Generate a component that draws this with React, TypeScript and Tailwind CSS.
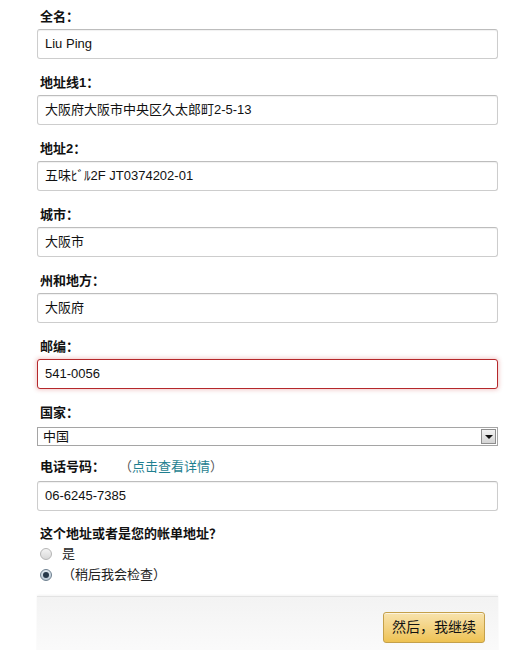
import React from "react";

const font = { fontFamily: '"Liberation Sans", "Noto Sans CJK SC", Arial, sans-serif' };

type FieldProps = { label: string; value: string; error?: boolean };

const Field = ({ label, value, error }: FieldProps) => (
  <div className="mb-[15px]">
    <div className="h-[18px] leading-[18px] text-[13px] font-bold text-[#111] pl-[3px]">{label}</div>
    <div
      className={
        "mt-[3px] h-[30px] rounded-[3px] border bg-white flex items-center px-[7px] text-[13px] text-[#111] " +
        (error
          ? "border-[#b5282b] shadow-[0_0_4px_1px_rgba(200,40,40,0.25)]"
          : "border-[#cdcdcd] border-t-[#bdbdbd] shadow-[inset_0_1px_1px_rgba(0,0,0,0.06)]")
      }
    >
      {value}
    </div>
  </div>
);

const Radio = ({ checked, label }: { checked?: boolean; label: string }) => (
  <div className="h-[21px] flex items-center pl-[3px]">
    <span
      className={
        "w-[12px] h-[12px] rounded-full border flex items-center justify-center " +
        (checked
          ? "border-[#6d7f8f] bg-gradient-to-b from-[#dfe8ef] to-[#b9c7d3]"
          : "border-[#b5b5b5] bg-gradient-to-b from-[#f4f4f4] to-[#d8d8d8]")
      }
    >
      {checked && <span className="w-[6px] h-[6px] rounded-full bg-[#26384a]" />}
    </span>
    <span className="ml-[10px] text-[13px] text-[#222]">{label}</span>
  </div>
);

export default function App() {
  return (
    <div className="w-[529px] h-[650px] bg-white overflow-hidden" style={font}>
      <div className="pl-[37px] pr-[31px] pt-[8px]">
        <Field label="全名：" value="Liu Ping" />
        <Field label="地址线1：" value="大阪府大阪市中央区久太郎町2-5-13" />
        <Field label="地址2：" value="五味ﾋﾞﾙ2F JT0374202-01" />
        <Field label="城市：" value="大阪市" />
        <Field label="州和地方：" value="大阪府" />
        <Field label="邮编：" value="541-0056" error />

        <div className="mb-[12px]">
          <div className="h-[18px] leading-[18px] text-[13px] font-bold text-[#111] pl-[3px]">国家：</div>
          <div className="mt-[5px] h-[19px] border border-[#a5a5a5] bg-white flex items-center justify-between text-[13px] text-[#111]">
            <span className="pl-[5px]">中国</span>
            <span className="w-[15px] h-[15px] mr-[1px] border border-[#8e8e8e] bg-gradient-to-b from-[#f3f3f3] to-[#d4d4d4] flex items-center justify-center">
              <span className="w-0 h-0 border-l-[4px] border-r-[4px] border-t-[4px] border-l-transparent border-r-transparent border-t-[#111]" />
            </span>
          </div>
        </div>

        <div className="mb-[14px]">
          <div className="h-[18px] leading-[18px] text-[13px] font-bold text-[#111] pl-[3px] flex items-center">
            电话号码：
            <span className="ml-[14px] font-normal text-[#1f7f90]">
              <span className="text-[#555]">（</span>点击查看详情<span className="text-[#555]">）</span>
            </span>
          </div>
          <div className="mt-[5px] h-[30px] rounded-[3px] border border-[#cdcdcd] border-t-[#bdbdbd] shadow-[inset_0_1px_1px_rgba(0,0,0,0.06)] bg-white flex items-center px-[7px] text-[13px] text-[#111]">
            06-6245-7385
          </div>
        </div>

        <div className="h-[18px] leading-[18px] text-[13px] font-bold text-[#111] pl-[3px]">这个地址或者是您的帐单地址？</div>
        <div>
          <Radio label="是" />
          <Radio checked label="（稍后我会检查）" />
        </div>

        <div className="mt-[11px] h-[60px] border-t border-[#e3e3e3] shadow-[0_-1px_2px_rgba(0,0,0,0.05)] bg-gradient-to-b from-[#f3f3f3] to-[#fbfbfb] flex justify-end pt-[15px] pr-[13px]">
          <button className="h-[31px] w-[102px] rounded-[3px] border border-[#c4a04a] bg-gradient-to-b from-[#f8e3ad] to-[#eec251] text-[14px] text-[#111] shadow-[0_1px_0_rgba(255,255,255,0.6)_inset]">
            然后，我继续
          </button>
        </div>
      </div>
    </div>
  );
}
